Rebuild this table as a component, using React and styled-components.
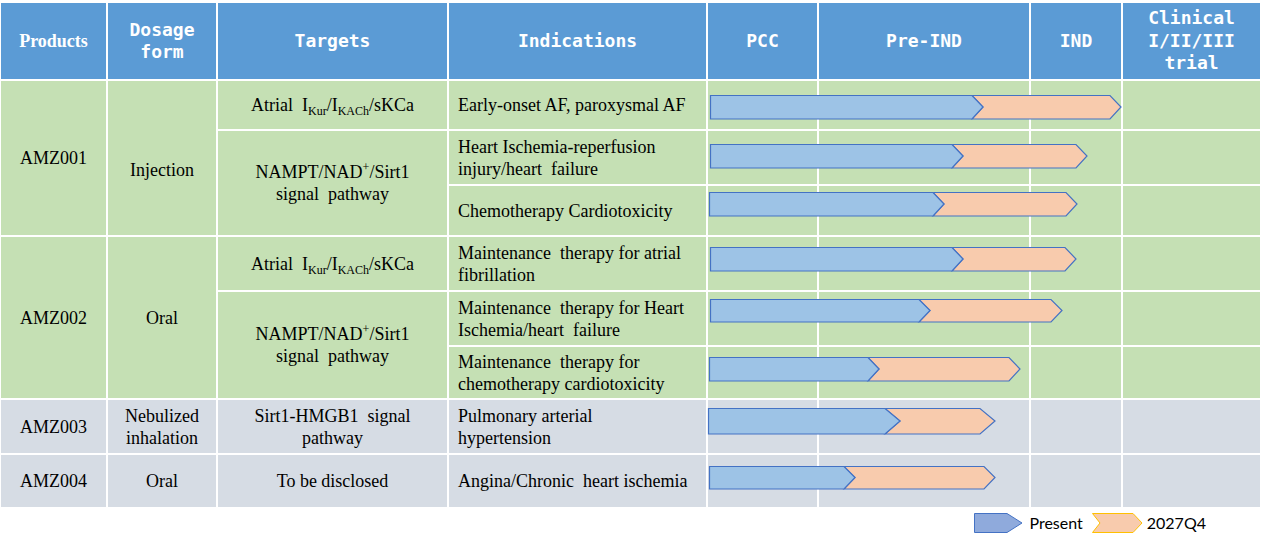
import React from "react";
import styled, { createGlobalStyle } from "styled-components";

const GREEN = "#C5E0B4";
const GREY = "#D6DCE4";
const STROKE = "#4472C4";

const Global = createGlobalStyle`
  html, body { margin: 0; padding: 0; background: #fff; }
  body { width: 1264px; height: 548px; overflow: hidden; }
`;

const Page = styled.div`
  padding: 3px 0 0 1px;
  font-family: "Liberation Serif", "Times New Roman", serif;
  color: #000;
`;

const Table = styled.div`
  display: grid;
  width: 1259px;
  grid-template-columns: 105px 108px 229px 257px 109px 210px 90px 137px;
  grid-template-rows: 76px 48px 53px 49px 53px 53px 51px 53px 52px;
  gap: 2px;
  background: #fff;
`;

const HeadCell = styled.div`
  grid-row: 1;
  background: #5b9bd5;
  color: #fff;
  display: flex;
  align-items: center;
  justify-content: center;
  text-align: center;
  font-family: ${(p) =>
    p.$serif
      ? '"Liberation Serif", "Times New Roman", serif'
      : '"DejaVu Sans Mono", monospace'};
  font-weight: bold;
  font-size: 18px;
  line-height: 22.5px;
`;

const Cell = styled.div`
  grid-column: ${(p) => p.$col};
  grid-row: ${(p) => p.$row};
  background: ${(p) => p.$bg};
  display: flex;
  align-items: center;
  justify-content: ${(p) => (p.$left ? "flex-start" : "center")};
  text-align: ${(p) => (p.$left ? "left" : "center")};
  padding: ${(p) => (p.$left ? "0 0 0 9px" : "0")};
  padding-top: ${(p) => p.$shift || 0}px;
  font-size: 18px;
  line-height: 22px;
  white-space: pre;
`;

const Stage = styled.div`
  grid-column: ${(p) => p.$col};
  grid-row: ${(p) => p.$row};
  background: ${(p) => p.$bg};
`;

const ArrowLayer = styled.div`
  grid-column: 5 / 9;
  grid-row: ${(p) => p.$row};
  z-index: 1;
  pointer-events: none;
`;

const ArrowSvg = styled.svg`
  display: block;
  overflow: visible;
`;

const Sub = styled.sub`
  font-size: 12px;
  vertical-align: -4px;
  line-height: 0;
`;

const Sup = styled.sup`
  font-size: 12px;
  vertical-align: 7px;
  line-height: 0;
`;

const Legend = styled.div`
  display: flex;
  align-items: center;
  justify-content: flex-end;
  width: 1259px;
  padding-right: 54px;
  box-sizing: border-box;
  margin-top: 6px;
  height: 20px;
`;

const LegendLabel = styled.span`
  font-family: Lato, "Liberation Sans", sans-serif;
  font-size: 16px;
  line-height: 20px;
  margin: 0 ${(p) => p.$mr}px 0 ${(p) => p.$ml}px;
`;

const GANTT_X = 708;

function Arrow({ s, b, t, top, h = 24, p = 11 }) {
  const bx = b - s;
  const tx = t - s;
  const mid = h / 2;
  return (
    <ArrowSvg
      width={tx + 1}
      height={h + 1}
      style={{ marginLeft: s - GANTT_X, marginTop: top }}
    >
      <polygon
        points={`${bx},0.5 ${tx - p},0.5 ${tx},${mid} ${tx - p},${h} ${bx},${h} ${bx + p},${mid}`}
        fill="#F8CBAD"
        stroke={STROKE}
        strokeWidth="1.2"
      />
      <polygon
        points={`0.5,0.5 ${bx},0.5 ${bx + p},${mid} ${bx},${h} 0.5,${h}`}
        fill="#9DC3E6"
        stroke={STROKE}
        strokeWidth="1.2"
      />
    </ArrowSvg>
  );
}

const atrial = (
  <>
    Atrial  I<Sub>Kur</Sub>/I<Sub>KACh</Sub>/sKCa
  </>
);
const nampt = (
  <>
    NAMPT/NAD<Sup>+</Sup>/Sirt1{"\n"}signal  pathway
  </>
);

const rows = [
  { bg: GREEN, ind: "Early-onset AF, paroxysmal AF", arrow: { s: 710, b: 972, t: 1121, top: 14 } },
  { bg: GREEN, ind: "Heart Ischemia-reperfusion\ninjury/heart  failure", arrow: { s: 710, b: 952, t: 1087, top: 13 } },
  { bg: GREEN, ind: "Chemotherapy Cardiotoxicity", arrow: { s: 709, b: 933, t: 1077, top: 6 } },
  { bg: GREEN, ind: "Maintenance  therapy for atrial\nfibrillation", arrow: { s: 710, b: 952, t: 1076, top: 10 } },
  { bg: GREEN, ind: "Maintenance  therapy for Heart\nIschemia/heart  failure", arrow: { s: 710, b: 919, t: 1062, top: 7, h: 23 } },
  { bg: GREEN, ind: "Maintenance  therapy for\nchemotherapy cardiotoxicity", arrow: { s: 709, b: 868, t: 1020, top: 10 } },
  { bg: GREY, ind: "Pulmonary arterial\nhypertension", arrow: { s: 708, b: 885, t: 995, top: 8, h: 26, p: 15 } },
  { bg: GREY, ind: "Angina/Chronic  heart ischemia", arrow: { s: 709, b: 844, t: 995, top: 11, h: 23 } },
];

const groups = [
  { row: "2 / 5", bg: GREEN, name: "AMZ001", form: "Injection", formShift: 24 },
  { row: "5 / 8", bg: GREEN, name: "AMZ002", form: "Oral" },
  { row: "8", bg: GREY, name: "AMZ003", form: "Nebulized\ninhalation" },
  { row: "9", bg: GREY, name: "AMZ004", form: "Oral" },
];

const targets = [
  { row: "2", bg: GREEN, text: atrial },
  { row: "3 / 5", bg: GREEN, text: nampt },
  { row: "5", bg: GREEN, text: atrial },
  { row: "6 / 8", bg: GREEN, text: nampt },
  { row: "8", bg: GREY, text: "Sirt1-HMGB1  signal\npathway" },
  { row: "9", bg: GREY, text: "To be disclosed" },
];

const headers = [
  { label: "Products", serif: true },
  { label: "Dosage\nform" },
  { label: "Targets" },
  { label: "Indications" },
  { label: "PCC" },
  { label: "Pre-IND" },
  { label: "IND" },
  { label: "Clinical\nI/II/III\ntrial" },
];

const HeadText = styled.span`
  white-space: pre;
`;

export default function App() {
  return (
    <Page>
      <Global />
      <Table>
        {headers.map((h) => (
          <HeadCell key={h.label} $serif={h.serif}>
            <HeadText>{h.label}</HeadText>
          </HeadCell>
        ))}

        {groups.map((g) => (
          <React.Fragment key={g.name}>
            <Cell $col={1} $row={g.row} $bg={g.bg}>
              {g.name}
            </Cell>
            <Cell $col={2} $row={g.row} $bg={g.bg} $shift={g.formShift}>
              {g.form}
            </Cell>
          </React.Fragment>
        ))}

        {targets.map((t, i) => (
          <Cell key={i} $col={3} $row={t.row} $bg={t.bg}>
            <span>{t.text}</span>
          </Cell>
        ))}

        {rows.map((r, i) => {
          const row = i + 2;
          return (
            <React.Fragment key={i}>
              <Cell $col={4} $row={row} $bg={r.bg} $left>
                {r.ind}
              </Cell>
              {[5, 6, 7, 8].map((c) => (
                <Stage key={c} $col={c} $row={row} $bg={r.bg} />
              ))}
              <ArrowLayer $row={row}>
                <Arrow {...r.arrow} />
              </ArrowLayer>
            </React.Fragment>
          );
        })}
      </Table>

      <Legend>
        <svg width="49" height="20" style={{ display: "block" }}>
          <polygon
            points="0.5,0.5 33,0.5 48,10 33,19.5 0.5,19.5"
            fill="#8FAADC"
            stroke={STROKE}
            strokeWidth="1"
          />
        </svg>
        <LegendLabel $ml={6} $mr={9}>Present</LegendLabel>
        <svg width="51" height="20" style={{ display: "block" }}>
          <polygon
            points="0.5,0.5 41,0.5 50,10 41,19.5 0.5,19.5 8,10"
            fill="#F8CBAD"
            stroke="#FFC000"
            strokeWidth="1"
          />
        </svg>
        <LegendLabel $ml={4} $mr={0}>2027Q4</LegendLabel>
      </Legend>
    </Page>
  );
}
